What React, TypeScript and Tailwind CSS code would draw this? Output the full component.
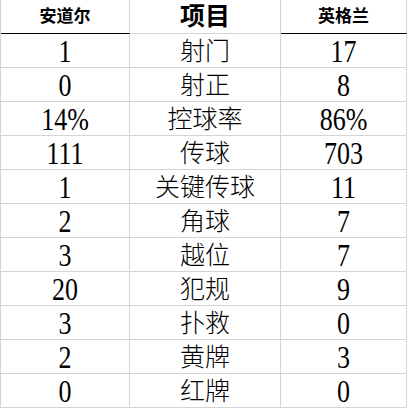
const rows: [string, string, string][] = [
	['1', '射门', '17'],
	['0', '射正', '8'],
	['14%', '控球率', '86%'],
	['111', '传球', '703'],
	['1', '关键传球', '11'],
	['2', '角球', '7'],
	['3', '越位', '7'],
	['20', '犯规', '9'],
	['3', '扑救', '0'],
	['2', '黄牌', '3'],
	['0', '红牌', '0']
];

const font = "font-['Liberation_Serif','Noto_Sans_CJK_SC',serif]";

const Num = ({ value }: { value: string }) => (
	<span className="inline-block scale-y-[1.18] pt-[2px]">{value}</span>
);

export default function App() {
	return (
		<div className={`w-[407px] border-l border-[#d4d4d4] bg-white text-black ${font}`}>
			<div className="flex h-[34px]">
				<div className="flex w-[129px] items-center justify-center border-b border-r border-b-black border-r-[#d4d4d4] text-[17px] font-bold">
					安道尔
				</div>
				<div className="flex w-[151px] items-center justify-center border-b border-r border-[#d4d4d4] text-[25px] font-bold">
					项目
				</div>
				<div className="flex w-[126px] items-center justify-center border-b border-r border-b-black border-r-[#d4d4d4] text-[17px] font-bold">
					英格兰
				</div>
			</div>
			{rows.map(([home, label, away]) => (
				<div key={label} className="flex h-[34px] text-[26px] leading-none">
					<div className="flex w-[129px] items-center justify-center border-b border-r border-[#d4d4d4]">
						<Num value={home} />
					</div>
					<div className="flex w-[151px] items-center justify-center border-b border-r border-[#d4d4d4] pt-[2px] text-[25px] font-light">
						{label}
					</div>
					<div className="flex w-[126px] items-center justify-center border-b border-r border-[#d4d4d4]">
						<Num value={away} />
					</div>
				</div>
			))}
		</div>
	);
}
